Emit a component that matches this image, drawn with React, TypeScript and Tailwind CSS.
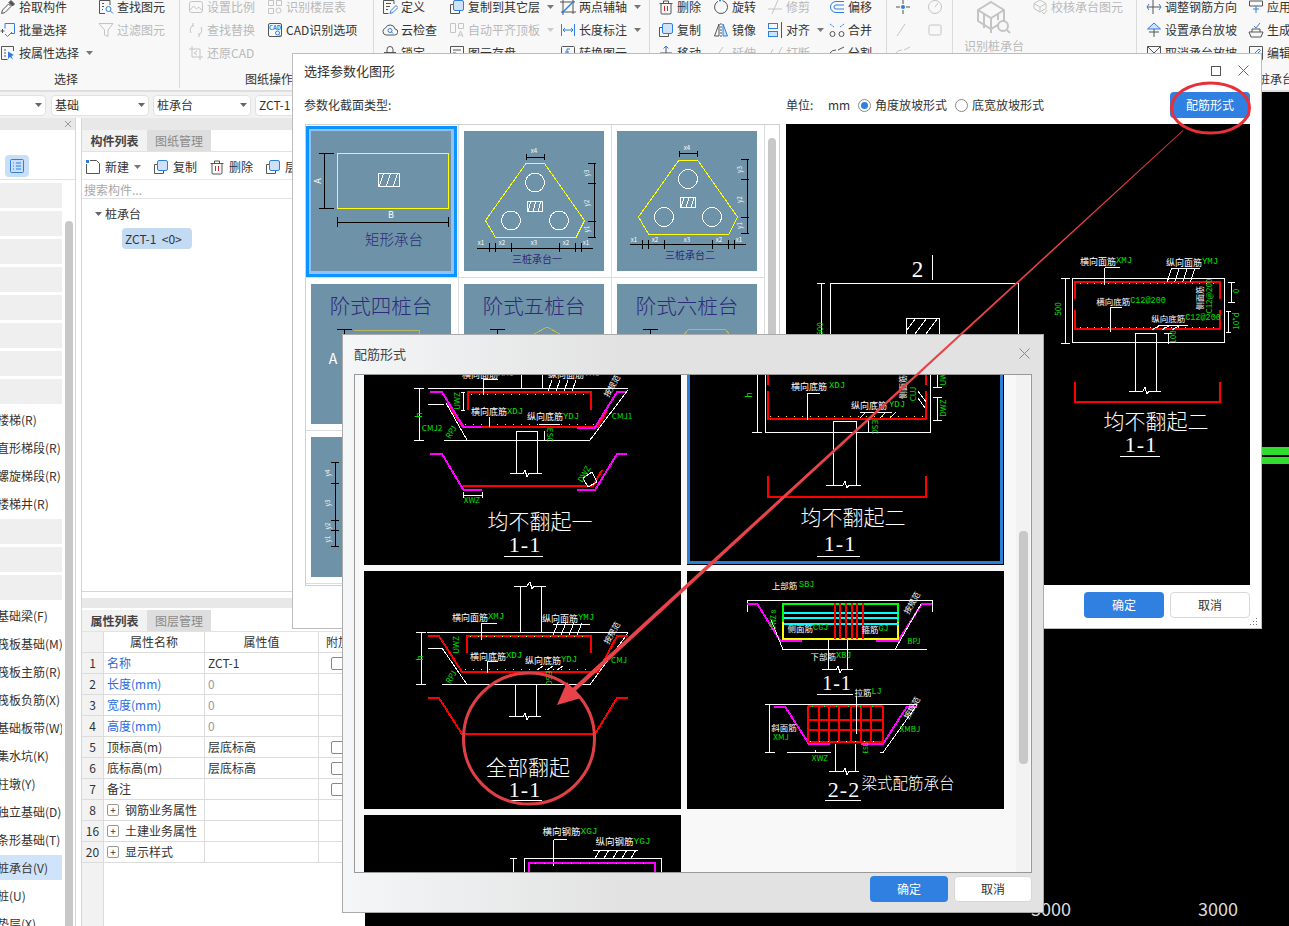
import React from 'react';

const FONT = "'Noto Sans CJK SC','Noto Sans',sans-serif";
const GREEN = '#00e000';
const RED = '#ff0000';
const MAG = '#ff00ff';
const INK = '#2e2a7a';

/* ---------- small svg helpers for the CAD drawings ---------- */
function P({ d, c = '#fff', w = 1 }: { d: string; c?: string; w?: number }) {
  return <path d={d} fill="none" stroke={c} strokeWidth={w} />;
}
function T({ x, y, s = 8, c = '#fff', a = 0, children }: { x: number; y: number; s?: number; c?: string; a?: number; children: React.ReactNode }) {
  return (
    <text x={x} y={y - s * 0.07} fontSize={s} fontWeight={s >= 14 ? 300 : 400} fill={c} textAnchor="middle" dominantBaseline="central" transform={a ? `rotate(${a} ${x} ${y})` : undefined}>
      {children}
    </text>
  );
}
function Sec({ x, y, t, s = 22 }: { x: number; y: number; t: string; s?: number }) {
  return (
    <text x={x} y={y - 1} fontSize={s} fill="#fff" textAnchor="middle" dominantBaseline="central" fontFamily="'Liberation Serif',serif" letterSpacing="1">
      {t}
    </text>
  );
}
function L({ x, y, w, g, s = 9, a = 0 }: { x: number; y: number; w: string; g: string; s?: number; a?: number }) {
  return (
    <T x={x} y={y} s={s} a={a}>
      {w}
      <tspan fill={GREEN} fontFamily="'Liberation Mono',monospace">{g}</tspan>
    </T>
  );
}
function Dots({ x1, x2, y, step = 8, c = '#ffff00' }: { x1: number; x2: number; y: number; step?: number; c?: string }) {
  const out: React.ReactNode[] = [];
  for (let x = x1; x <= x2; x += step) out.push(<rect key={x} x={x} y={y} width={1} height={1} fill={c} />);
  return <>{out}</>;
}
function Draw({ vb, children }: { vb: string; children: React.ReactNode }) {
  return (
    <svg viewBox={vb} className="block w-full h-full" shapeRendering="crispEdges" fontFamily={FONT}>
      {children}
    </svg>
  );
}
function Hatch({ x, y, w, h, n = 3 }: { x: number; y: number; w: number; h: number; n?: number }) {
  const st = w / n;
  let d = '';
  for (let i = 0; i < n; i++) d += `M${x + st * i + st * 0.2} ${y + h}L${x + st * i + st * 0.8} ${y}`;
  return (
    <>
      <rect x={x} y={y} width={w} height={h} fill="none" stroke="#fff" />
      <P d={d} />
    </>
  );
}

/* ---------- parametric thumbnails ---------- */
function RectThumb() {
  return (
    <Draw vb="311 131 140 140">
      <rect x="337" y="153" width="111" height="55" fill="none" stroke="#ffff00" />
      <Hatch x={378} y={173} w={21} h={13} />
      <P d="M324 153V208M319 153H334M319 208H334" c="#000" />
      <P d="M337 222H448M337 217V227M448 217V227" c="#000" />
      <T x={318} y={181} s={9} a={-90}>A</T>
      <T x={391} y={215} s={9}>B</T>
      <T x={394} y={240} s={14.5} c={INK}>矩形承台</T>
    </Draw>
  );
}
function PileThumb({ title, vb }: { title: string; vb: string }) {
  return (
    <Draw vb={vb}>
      <path d="M526 163.5H544.5L584.5 220.5L576 237.5H495.5L485.5 220.5Z" fill="none" stroke="#ffff00" />
      <circle cx="535" cy="182.5" r="9.5" fill="none" stroke="#fff" />
      <circle cx="511" cy="220.5" r="9.5" fill="none" stroke="#fff" />
      <circle cx="559" cy="220.5" r="9.5" fill="none" stroke="#fff" />
      <Hatch x={527} y={201} w={15} h={10} />
      <P d="M526 157H544M526 154V160M544 154V160" c="#000" />
      <T x={534} y={151} s={6}>x4</T>
      <P d="M594 163V237M588 163H596M588 183H596M588 221H596M588 237H596" c="#000" />
      <T x={587} y={173} s={6} a={-90}>y3</T>
      <T x={587} y={203} s={6} a={-90}>y2</T>
      <T x={587} y={229} s={6} a={-90}>y1</T>
      <P d="M477 248H593M489 243V252M495 243V252M511 243V252M559 243V252M575 243V252M581 243V252" c="#000" />
      <T x={481} y={243} s={6}>x1</T>
      <T x={502} y={243} s={6}>x2</T>
      <T x={534} y={243} s={6}>x3</T>
      <T x={566} y={243} s={6}>x2</T>
      <T x={586} y={243} s={6}>x1</T>
      <T x={537} y={259} s={10} c={INK}>{title}</T>
    </Draw>
  );
}
function StepThumb({ title, n }: { title: string; n: number }) {
  return (
    <div className="relative w-[140px] h-[140px] bg-[#6e93a8] overflow-hidden">
      <svg viewBox="0 0 140 140" className="block w-full h-full" shapeRendering="crispEdges" fontFamily={FONT}>
        <text x="70" y="21" fontSize="20.5" fontWeight="300" fill={INK} textAnchor="middle" dominantBaseline="central">{title}</text>
        <P d="M26 45H41M33 45V52" c="#000" />
        {n === 0 && <P d="M43 46H108V52" c="#b8b860" />}
        {n === 1 && <P d="M70 50L83 43L96 50" c="#b8b860" />}
        {n === 2 && <P d="M66 52L72 45H108L114 52" c="#b8b860" />}
        {n === 0 && <text x="22" y="74" fontSize="14" fill="#fff" textAnchor="middle" dominantBaseline="central">A</text>}
      </svg>
    </div>
  );
}
function DimThumb() {
  return (
    <Draw vb="311 437 140 140">
      <P d="M335 462V546M331 462H339M331 483H339M331 520H339M331 530H339M331 546H339" c="#000" />
      <T x={328} y={473} s={6} a={-90}>y4</T>
      <T x={328} y={503} s={6} a={-90}>y3</T>
      <T x={328} y={526} s={6} a={-90}>y2</T>
      <T x={328} y={539} s={6} a={-90}>y1</T>
    </Draw>
  );
}

/* ---------- CAD previews ---------- */
function MainPreview() {
  const h = [1171.7, 1179.3, 1187.3, 1195].map((x) => `M${x} 268L${x - 4.5} 282`).join('');
  return (
    <Draw vb="786 124 464 461">
      <Sec x={918} y={270} t="2" s={23} />
      <P d="M932 255V280M830 334V283H1018V334M906 334V318H939V334M821 283V334M817 283H825" />
      <P d="M906 331L916 318M915 334L927 318M926 334L938 318" />
      <T x={820} y={329} s={8} c={GREEN} a={-90}>500</T>
      <rect x="1072.5" y="278.5" width="152" height="64" fill="none" stroke="#fff" />
      <P d="M1075 299V282H1220V299M1075 310V329H1220V310" c={RED} w={2} />
      <Dots x1={1080} x2={1216} y={327} step={7} />
      <Dots x1={1080} x2={1216} y={283} step={7} />
      <L x={1106} y={262} w="横向面筋" g="XMJ" s={9} />
      <L x={1192} y={263} w="纵向面筋" g="YMJ" s={9} />
      <L x={1131} y={302} w="横向底筋" g="C12@200" s={8.5} />
      <L x={1186} y={319} w="纵向底筋" g="C12@200" s={8.5} />
      <P d={`M1104.5 267.5H1120M1104.5 267.5V285${h}M1172 268H1200`} />
      <P d="M1110 307.5H1122M1110 307.5V331.5M1160 325L1152 330M1170 325L1162 330M1180 325L1172 330M1188 325H1160" />
      <T x={1200} y={298} s={8} a={-90}>侧面筋</T>
      <T x={1209} y={296} s={8} c={GREEN} a={-90}>C12@200</T>
      <P d="M1065 278V343M1061 278H1070M1061 343H1070M1231.5 282V302M1228 282H1235M1228 302H1235M1228 311V332M1226 311H1231M1226 332H1231" />
      <T x={1058} y={309} s={8} c={GREEN} a={-90}>500</T>
      <T x={1236} y={291} s={8} c={GREEN} a={-90}>0</T>
      <T x={1236} y={321} s={8} c={GREEN} a={-90}>10*d</T>
      <P d="M1135.5 391V333.5H1156.5V391M1129 391H1143L1145 387L1147 394L1149 391H1161M1168 333V344M1164 333H1172" />
      <T x={1173} y={337} s={8} c={GREEN} a={-90}>100</T>
      <P d="M1075 382V402H1220V382" c={RED} w={2} />
      <T x={1156} y={421} s={21}>均不翻起二</T>
      <Sec x={1141} y={445} t="1-1" />
      <P d="M1120 456.5H1160" />
    </Draw>
  );
}

function CellOne() {
  return (
    <Draw vb="364 375 317 190">
      <P d="M428 388H628M521.5 375V388M542.5 375V388M419.5 388V440M414 388H424M414 440H424" />
      <P d="M468 410V392H591V410" c={RED} w={2} />
      <P d="M447 403L463 427H598L607 410" c={RED} w={2} />
      <Dots x1={471} x2={590} y={394} step={8} />
      <Dots x1={465} x2={595} y={424} step={8} />
      <P d="M430 392H442L463.5 427H481M627 392H617L595 427.5H577" c={MAG} w={2} />
      <P d="M444 440H590L628 390M467 440L446 403M428 404H444" />
      <T x={419} y={415} s={9} c={GREEN} a={-90}>h</T>
      <T x={457} y={401} s={8} c={GREEN} a={-90}>UWZ</T>
      <P d="M463 392V410M461 392H465M461 410H465" />
      <L x={497} y={412.5} w="横向底筋" g="XDJ" />
      <L x={553} y={417.5} w="纵向底筋" g="YDJ" />
      <L x={488} y={375} w="横向面筋" g="XMJ" />
      <L x={574} y={375} w="纵向面筋" g="YMJ" />
      <P d="M483 379V395M483 379H498M548 391L552 380M556 391L560 380M564 391L568 380M572 391L576 380M539 424H560M489 417V427" />
      <T x={432} y={428} s={8} c={GREEN}>CMJ2</T>
      <T x={622} y={416} s={8} c={GREEN}>CMJ1</T>
      <T x={451} y={432} s={8} c={GREEN} a={-60}>RPJ</T>
      <T x={550} y={435} s={8} c={GREEN} a={90}>ESC</T>
      <T x={612} y={386} s={8} a={-60}>按规范</T>
      <P d="M516 473.5V431.5H537.5V473.5M510 473.5H523L525 470L527 477L529 473.5H542M544 431V440" />
      <P d="M430 454H442L463.5 490H481.5M627 454H617L595 490H577" c={MAG} w={2} />
      <P d="M463 486H593L602 470" c={RED} w={2} />
      <P d="M583 478L592 472L597 482L588 487ZM463 492V498M482 492V498M463 495H482" />
      <T x={584} y={474} s={8} c={GREEN} a={-60}>DWZ</T>
      <T x={472} y={500} s={8} c={GREEN}>XWZ</T>
      <T x={540} y={521} s={21}>均不翻起一</T>
      <Sec x={525} y={545} t="1-1" />
      <P d="M504 556H543" />
    </Draw>
  );
}

function CellTwo() {
  return (
    <div className="w-[317px] h-[190px] bg-black">
      <div className="w-[316px] h-[189px] border-x-[3px] border-b-[3px] border-[#2a7fd8] bg-black">
        <Draw vb="690 375 310 186">
          <P d="M765.5 375V432.5H930.5V375M757.5 375V432.5M752 432.5H762M937.5 397V420M933 397H942M933 420H942M937.5 375V387M933 387H942" />
          <P d="M768 385V375M768 391V419H926V391M926 385V375" c={RED} w={2} />
          <Dots x1={770} x2={922} y={416} step={8} />
          <L x={818} y={387} w="横向底筋 " g="XDJ" />
          <L x={878} y={406} w="纵向底筋 " g="YDJ" />
          <P d="M807 393H820M807 393V420M860 418L866 412M870 418L876 412M880 418L886 412M890 418L896 412M860 412H892" />
          <T x={749} y={395} s={9} c={GREEN} a={-90}>h</T>
          <T x={943} y={408} s={8} c={GREEN} a={-90}>DWZ</T>
          <T x={943} y={379} s={8} c={GREEN} a={-90}>UW</T>
          <T x={903} y={387} s={8} a={-90}>侧面筋</T>
          <T x={913} y={394} s={8} c={GREEN} a={-90}>CUJ</T>
          <P d="M918 391L926 402M918 398L925 408" />
          <T x={875} y={427} s={8} c={GREEN} a={90}>ESC</T>
          <P d="M833.5 485V421.5H856.5V485M826 485H843L845 481L847 488L849 485H861M868 420V432" />
          <P d="M768 476V497H926V476" c={RED} w={2} />
          <T x={853} y={517} s={21}>均不翻起二</T>
          <Sec x={840} y={544} t="1-1" />
          <P d="M817 556H860" />
        </Draw>
      </div>
    </div>
  );
}

function CellThree() {
  return (
    <Draw vb="364 571 317 238">
      <P d="M520 632V586H514H527L530 582L532 589L534 586H546M541.5 586V632" />
      <P d="M427 632.5H628M421.5 632.5V684.5M416 632.5H426M416 684.5H426M442 684.5H590L628 633M467 684.5L442 648M428 648H442" />
      <P d="M466.5 653V636H590.5V653" c={RED} w={2} />
      <P d="M428 636H439L462 672H598L617 636H628" c={RED} w={2} />
      <Dots x1={470} x2={588} y={636} step={8} />
      <Dots x1={465} x2={595} y={669} step={8} />
      <T x={420} y={658} s={9} c={GREEN} a={-90}>h</T>
      <T x={456} y={645} s={8} c={GREEN} a={-90}>UWZ</T>
      <L x={478} y={618} w="横向面筋" g="XMJ" />
      <L x={568} y={619} w="纵向面筋" g="YMJ" />
      <L x={496} y={657} w="横向底筋" g="XDJ" />
      <L x={551} y={661} w="纵向底筋" g="YDJ" />
      <P d="M481 623H497M481 623V640M553 635L558 623M561 635L566 623M569 635L574 623M577 635L582 623M553 624H590M487 661H498M487 661V673M537 670L543 666M547 670L553 666M557 670L563 666" />
      <T x={619} y={660} s={8} c={GREEN}>CMJ</T>
      <T x={451} y={677} s={8} c={GREEN} a={-60}>RPJ</T>
      <T x={549} y={678} s={8} c={GREEN} a={90}>ESC</T>
      <T x={612} y={633} s={8} a={-60}>按规范</T>
      <P d="M515 716.5V684.5M536.5 684.5V716.5M509 716.5H523L525 713L527 720L529 716.5H541" />
      <P d="M428 698H439L462 734H595L617 698H628" c={RED} w={2} />
      <T x={528} y={767} s={21}>全部翻起</T>
      <Sec x={525} y={790} t="1-1" />
      <P d="M504 800H542" />
    </Draw>
  );
}

function CellFour() {
  const verts = [835, 840, 846, 852, 857, 863];
  const gx = [808, 819, 829, 839, 851, 861, 871, 883];
  const gy = [706, 720, 730, 742];
  return (
    <Draw vb="687 571 317 238">
      <P d="M747 600H932M747 600V612M932 600V612" />
      <P d="M747 603.5H757L780 640.5H802M932 603.5H922L898.5 640.5H876" c={MAG} w={2} />
      <P d="M783 622V604H898V622" c="#00ff00" w={2} />
      <P d="M783 622V639H898V622" c="#ffff00" w={2} />
      <P d="M784 613H899M784 618H899M784 624H899" c="#00ffff" w={2} />
      {verts.map((x) => (
        <P key={x} d={`M${x} 603V639`} c={RED} w={2} />
      ))}
      <P d="M783 649.5H927M783 649.5L771 620M895 649.5L921 604M828.5 669.5V640M847.5 640V669.5M822 669.5H836L838 666L840 673L842 669.5H853" />
      <L x={793} y={586} w="上部筋 " g="SBJ" s={8.5} />
      <L x={808} y={629} w="侧面筋" g="CGJ" s={8.5} />
      <L x={875} y={630} w="箍筋" g="GJ" s={8.5} />
      <L x={831} y={657} w="下部筋" g="XBJ" s={8.5} />
      <T x={914} y={641} s={8} c={GREEN}>BPJ</T>
      <T x={773} y={620} s={7} c={GREEN} a={-90}>UWZ 8</T>
      <T x={912} y={603} s={8} a={-60}>按规范</T>
      <Sec x={837} y={684} t="1-1" s={20} />
      <P d="M817 694.5H853" />
      <P d="M774 704.5H917M769.5 704V752.5M765 704H775M765 752.5H775M787 752.5H815M880 752.5H883L917 705" />
      <P d="M774 706.5H785L809 744H830M917 706.5H907L883 744H861" c={MAG} w={2} />
      {gx.map((x) => (
        <P key={x} d={`M${x} 706V742`} c={RED} w={2} />
      ))}
      {gy.map((y) => (
        <P key={y} d={`M808 ${y}H883`} c={RED} w={2} />
      ))}
      <Dots x1={810} x2={880} y={741} step={9} />
      <Dots x1={812} x2={880} y={706} step={12} c="#00ff00" />
      <L x={868} y={693} w="拉筋" g="LJ" s={8.5} />
      <T x={784} y={728} s={8.5}>斜面筋</T>
      <T x={781} y={737} s={8} c={GREEN}>XMJ</T>
      <T x={910} y={729} s={8} c={GREEN}>XMBJ</T>
      <T x={820} y={758} s={8} c={GREEN}>XWZ</T>
      <T x={912} y={708} s={8} a={-60}>按规范</T>
      <P d="M856 696V734M815 752V750M809 752H831" />
      <T x={866} y={748} s={6} c={GREEN} a={-90}>ESB</T>
      <P d="M835.5 771.5V743.5M855 743.5V771.5M829 771.5H843L845 768L847 775L849 771.5H859" />
      <Sec x={844} y={790} t="2-2" />
      <P d="M825 800H861" />
      <T x={908} y={783} s={15.5}>梁式配筋承台</T>
    </Draw>
  );
}

function CellFive() {
  return (
    <div className="w-[317px] h-[80px] bg-black">
      <Draw vb="364 815 317 80">
        <L x={570} y={832} w="横向钢筋" g="XGJ" s={9.5} />
        <L x={623} y={842} w="纵向钢筋" g="YGJ" s={9.5} />
        <P d="M553.5 839.5H567M553.5 839.5V866M593 850H638M595 858L600 850M604 858L609 850M613 858L618 850M622 858L627 850M631 858L636 850" />
        <P d="M524 880V858.5H661V880M510 858H517M513 858V880" />
        <P d="M529 880V862.5H655V880" c={MAG} w={2} />
        <Dots x1={535} x2={650} y={863} step={9} c="#00ffff" />
      </Draw>
    </div>
  );
}

/* ---------- ribbon icons ---------- */
type IconName =
  | 'pick' | 'find' | 'batch' | 'filter' | 'attr' | 'scale' | 'floor' | 'swap' | 'cad' | 'crop'
  | 'def' | 'cloud' | 'lock' | 'copy' | 'flush' | 'save' | 'axis' | 'dim' | 'conv' | 'del' | 'rot'
  | 'mirror' | 'trim' | 'align' | 'offset' | 'merge' | 'move' | 'extend' | 'break' | 'split'
  | 'adj' | 'slope' | 'nope' | 'apply' | 'gen' | 'edit' | 'check';

function Icon({ n, g }: { n: IconName; g?: boolean }) {
  const s = g ? '#c4c4c4' : '#555';
  const a = g ? '#c4c4c4' : '#2f7fe0';
  const f = g ? 'none' : '#cfe2fa';
  const map: Record<IconName, React.ReactNode> = {
    pick: <><path d="M1.5 14.5l1-3.5 6-6 2.5 2.5-6 6z" stroke={s} /><path d="M9 3.5l3.5 3.5M11 1.5l3.5 3.5-2 2-3.5-3.5z" fill={s} stroke={s} /></>,
    find: <><path d="M12 6V1.5H1.5v13H7" stroke={s} /><path d="M4 4.5h2M4 7.5h2M4 10.5h1" stroke={s} /><circle cx="10.5" cy="10" r="2.5" stroke={a} /><path d="M12.5 12l2.5 2.5" stroke={a} /></>,
    batch: <><path d="M5 1.5h9.5v10H10M5 1.5v5" stroke={a} /><path d="M.5 9h4M2.5 7v4" stroke={s} /><path d="M5 12l2.5 2.5L12 10" stroke={a} /></>,
    filter: <path d="M1 1.5h14L10 8v6.5L6.5 13V8z" stroke={s} />,
    attr: <><path d="M13.5 6V1.5h-12v13h6" stroke={s} /><path d="M4 5h2M4 8h2M4 11h2" stroke={s} /><path d="M8 6.5l6 3.5-2.5 1L13 14.5l-3-2.5-2 2z" fill={a} /></>,
    scale: <><rect x="1.5" y="2.5" width="13" height="11" rx="2" stroke={s} /><path d="M2 11l3.5-4 3 3 2-2 3.5 3" stroke={s} /></>,
    floor: <><path d="M1.5 1.5h5v5h-5zM9.5 1.5h5v5h-5zM1.5 9.5h5v5h-5z" stroke={s} /><circle cx="11.5" cy="11.5" r="2.5" stroke={s} /></>,
    swap: <><path d="M3 11A6 6 0 0 1 5 3M5 1v4M13 5a6 6 0 0 1-2 8M11 15v-4" stroke={s} /></>,
    cad: <><rect x="1.5" y="1.5" width="13" height="13" rx="1.5" stroke={s} /><text x="8" y="8" fontSize="6" fontWeight="700" fill={a} textAnchor="middle">CAD</text><circle cx="10.5" cy="11" r="2" stroke={a} /><path d="M12 12.5l2 2" stroke={a} /></>,
    crop: <><path d="M4 1v11h11M1 4h11v11" stroke={s} /><path d="M9 6l-3 2 3 2" stroke={s} /></>,
    def: <><path d="M12 5V1.5H1.5v13h5" stroke={s} /><path d="M4 4.5h5M4 7.5h4M4 10.5h2" stroke={s} /><path d="M8 14.5l1-3 5-5 2 2-5 5z" stroke={a} /></>,
    cloud: <><path d="M4 13h8.5a3 3 0 0 0 .5-6 5 5 0 0 0-9.5-1A3.6 3.6 0 0 0 4 13z" stroke={s} /><circle cx="8" cy="8.5" r="2" stroke={a} /><path d="M9.5 10l1.5 1.5" stroke={a} /></>,
    lock: <><rect x="2.5" y="7.5" width="11" height="7" stroke={s} /><path d="M5 7.5V4.5a3 3 0 0 1 6 0v3" stroke={s} /></>,
    copy: <><path d="M4.5 5.5h-3v9h9v-3" stroke={s} /><rect x="4.5" y="1.5" width="10" height="10" rx="1.5" fill={f} stroke={a} /></>,
    flush: <><path d="M1.5 1.5h5v9h-5zM9.5 1.5h5v5h-5z" stroke={s} /><path d="M9 15l2.5-6L14 15M10 13h3" stroke={s} /></>,
    save: <><path d="M1.5 1.5h13v13h-13z" stroke={s} /><path d="M4 5h8M4 8h3M10 11h3" stroke={s} /></>,
    axis: <><path d="M3 1v15M13 0v15M0 3h15M1 13h15" stroke={s} /><path d="M2 14L14 2" stroke={a} strokeWidth="1.5" /></>,
    dim: <path d="M1.5 2v12M14.5 2v12M3 8h10M5 6L3 8l2 2M11 6l2 2-2 2" stroke={a} />,
    conv: <><rect x="1.5" y="1.5" width="13" height="13" rx="1" stroke={s} /><path d="M10 4H7v8M5 7h4" stroke={a} /></>,
    del: <><path d="M3 4.5h10V14a1 1 0 0 1-1 1H4a1 1 0 0 1-1-1zM1.5 4.5h13M5.5 4.5V2h5v2.5" stroke={s} /><path d="M6.5 7v5M9.5 7v5" stroke="#e02020" /></>,
    rot: <><path d="M9.5 1.7A6.5 6.5 0 1 1 5 2.3" stroke={s} /><circle cx="7" cy="1.5" r="1" fill={a} /></>,
    mirror: <><path d="M6 2L1.5 14H6z" stroke={s} /><path d="M10 2l4.5 12H10z" fill={f} stroke={a} /><path d="M8 1v14" stroke={s} strokeDasharray="2 1" /></>,
    trim: <path d="M1 10h14M11 1L5 15" stroke={s} />,
    align: <><rect x="1.5" y="1.5" width="9" height="5" stroke={a} /><rect x="1.5" y="9.5" width="9" height="5" fill={f} stroke={a} /><path d="M14.5 0v16" stroke={s} /></>,
    offset: <path d="M15 2.5H7a5.5 5.5 0 0 0 0 11h8M15 6H7a2 2 0 0 0 0 4h8" stroke={a} />,
    merge: <><circle cx="3.5" cy="12" r="2.5" stroke={s} /><circle cx="12.5" cy="12" r="2.5" stroke={s} /><path d="M1 2l4 3M15 2l-4 3" stroke={a} strokeDasharray="2 1" /></>,
    move: <><path d="M8 1v11M2 8h12" stroke={s} /><path d="M5.5 3.5L8 1l2.5 2.5" stroke={a} /></>,
    extend: <path d="M2 14L10 2" stroke={s} />,
    break: <path d="M1 14L6 4M10 12l5-10" stroke={s} />,
    split: <path d="M1 8a7 7 0 0 1 6-3M9 5l6-3" stroke={s} />,
    adj: <><path d="M7 1v14M1 8h14" stroke={s} /><path d="M3 5L1 8l2 3M13 5l2 3-2 3" stroke={a} /></>,
    slope: <><path d="M1.5 7l6.5-6 6.5 6z" fill={f} stroke={a} /><path d="M3 10h10M8 7v8" stroke={s} /></>,
    nope: <><path d="M1.5 1.5h13v13h-13z" stroke={s} /><path d="M1.5 1.5l13 13M14.5 1.5l-13 13" stroke={s} /></>,
    apply: <><path d="M1.5 2h13v5h-13z" stroke={s} /><path d="M5 10h6M8 7v7" stroke={a} /></>,
    gen: <><path d="M1 10h14l-2 5H3zM4 10V7h8v3" stroke={s} /><path d="M6 4l2 2 4-5" stroke={a} /></>,
    edit: <><path d="M1.5 1.5h13v13h-13z" stroke={s} /><path d="M6 11l1-3 4-4 1.5 1.5-4 4z" stroke={a} /></>,
    check: <><path d="M8 1l6 3.5v5L8 13 2 9.5v-5z" stroke={s} /><path d="M2 4.5L8 8l6-3.5M8 8v5" stroke={s} /><path d="M10 13l2 2 3-4" stroke={s} /></>,
  };
  return (
    <svg viewBox="0 0 16 16" className="w-4 h-4 shrink-0" fill="none">
      {map[n]}
    </svg>
  );
}

function Caret({ c = '#777' }: { c?: string }) {
  return (
    <svg viewBox="0 0 7 4" className="w-[7px] h-[4px] shrink-0">
      <path d="M0 0H7L3.5 4Z" fill={c} />
    </svg>
  );
}

function Item({ i, t, g, caret }: { i: IconName; t: string; g?: boolean; caret?: boolean }) {
  return (
    <div className={`flex items-center gap-[3px] h-[23px] whitespace-nowrap ${g ? 'text-[#b8b8b8]' : 'text-[#333]'}`}>
      <Icon n={i} g={g} />
      <span>{t}</span>
      {caret && <span className="ml-[4px]"><Caret c={g ? '#ccc' : '#777'} /></span>}
    </div>
  );
}

function Group({ w, pl = 8, label, labelMl = 0, children }: { w: number; pl?: number; label?: string; labelMl?: number; children: React.ReactNode }) {
  return (
    <div style={{ width: w }} className="shrink-0 h-[88px] border-r border-[#dadada] flex flex-col">
      <div style={{ paddingLeft: pl }} className="flex h-[73px] -mt-[5px] shrink-0">
        {children}
      </div>
      {label && <div style={{ marginLeft: labelMl }} className="text-[#333] leading-[14px] mt-[4px] whitespace-nowrap">{label}</div>}
    </div>
  );
}

function Col({ w, children }: { w?: number; children: React.ReactNode }) {
  return <div style={w ? { width: w } : undefined} className="flex flex-col shrink-0">{children}</div>;
}

function Ribbon() {
  return (
    <div className="h-[92px] shrink-0 bg-[#f8f8f8] border-b-2 border-[#dedede] overflow-hidden flex">
      <Group w={180} pl={0} label="选择" labelMl={54}>
        <Col w={98}>
          <Item i="pick" t="拾取构件" />
          <Item i="batch" t="批量选择" />
          <Item i="attr" t="按属性选择" caret />
        </Col>
        <Col>
          <Item i="find" t="查找图元" />
          <Item i="filter" t="过滤图元" g />
        </Col>
      </Group>
      <Group w={194} label="图纸操作" labelMl={65}>
        <Col w={79}>
          <Item i="scale" t="设置比例" g />
          <Item i="swap" t="查找替换" g />
          <Item i="crop" t="还原CAD" g />
        </Col>
        <Col>
          <Item i="floor" t="识别楼层表" g />
          <Item i="cad" t="CAD识别选项" />
        </Col>
      </Group>
      <Group w={276}>
        <Col w={67}>
          <Item i="def" t="定义" />
          <Item i="cloud" t="云检查" />
          <Item i="lock" t="锁定" />
        </Col>
        <Col w={111}>
          <Item i="copy" t="复制到其它层" caret />
          <Item i="flush" t="自动平齐顶板" g caret />
          <Item i="save" t="图元存盘" />
        </Col>
        <Col>
          <Item i="axis" t="两点辅轴" caret />
          <Item i="dim" t="长度标注" caret />
          <Item i="conv" t="转换图元" />
        </Col>
      </Group>
      <Group w={237}>
        <Col w={55}>
          <Item i="del" t="删除" />
          <Item i="copy" t="复制" />
          <Item i="move" t="移动" />
        </Col>
        <Col w={54}>
          <Item i="rot" t="旋转" />
          <Item i="mirror" t="镜像" />
          <Item i="extend" t="延伸" g />
        </Col>
        <Col w={62}>
          <Item i="trim" t="修剪" g />
          <Item i="align" t="对齐" caret />
          <Item i="break" t="打断" g />
        </Col>
        <Col>
          <Item i="offset" t="偏移" />
          <Item i="merge" t="合并" />
          <Item i="split" t="分割" />
        </Col>
      </Group>
      <Group w={66}>
        <Col w={32}>
          <div className="h-[23px] flex items-center">
            <svg viewBox="0 0 16 16" className="w-4 h-4" fill="none">
              <path d="M8 1v4M8 11v4M1 8h4M11 8h4" stroke="#555" />
              <circle cx="8" cy="8" r="2" fill="#2f7fe0" />
            </svg>
          </div>
          <div className="h-[23px] flex items-center"><Icon n="extend" g /></div>
          <div className="h-[23px] flex items-center"><Icon n="split" g /></div>
        </Col>
        <Col>
          <div className="h-[23px] flex items-center">
            <svg viewBox="0 0 16 16" className="w-4 h-4" fill="none">
              <circle cx="8" cy="8" r="6.5" stroke="#c4c4c4" />
              <path d="M8 8l3-4" stroke="#c4c4c4" />
            </svg>
          </div>
          <div className="h-[23px] flex items-center">
            <svg viewBox="0 0 16 16" className="w-4 h-4" fill="none">
              <rect x="2" y="3" width="12" height="10" rx="1.5" stroke="#c4c4c4" />
            </svg>
          </div>
        </Col>
      </Group>
      <Group w={184}>
        <div className="w-[66px] shrink-0 flex flex-col items-center pt-[5px] mr-[5px]">
          <svg viewBox="0 0 36 36" className="w-[36px] h-[36px] -ml-[3px]" fill="none" stroke="#c4c4c4" strokeWidth="2">
            <path d="M16 2l13 8v11l-13 8-13-8V10z" />
            <path d="M3 10l13 8 13-8M16 18v15M9 14v14M23 14v6" />
            <circle cx="28" cy="26" r="5" fill="#f8f8f8" />
            <path d="M32 30l3 3" />
          </svg>
          <span className="text-[#b8b8b8] mt-[3px] whitespace-nowrap leading-[14px]">识别桩承台</span>
        </div>
        <Col>
          <Item i="check" t="校核承台图元" g />
        </Col>
      </Group>
      <Group w={160} pl={9} label="桩承台" labelMl={121}>
        <Col w={102}>
          <Item i="adj" t="调整钢筋方向" />
          <Item i="slope" t="设置承台放坡" />
          <Item i="nope" t="取消承台放坡" />
        </Col>
        <Col>
          <Item i="apply" t="应用同名" />
          <Item i="gen" t="生成土方" />
          <Item i="edit" t="编辑钢筋" />
        </Col>
      </Group>
    </div>
  );
}

/* ---------- left panels ---------- */
function Select({ w, t, cut }: { w: string; t?: string; cut?: boolean }) {
  return (
    <div className={`${w} h-[21px] shrink-0 bg-white border border-[#e2e2e2] flex items-center px-[3px] ${cut ? 'rounded-r' : 'rounded'}`}>
      <span className="flex-1 truncate">{t}</span>
      <Caret c="#666" />
    </div>
  );
}

const leftRows: [string, boolean?][] = [
  ...Array.from({ length: 8 }, () => ['' ] as [string]),
  ['楼梯(R)'], ['直形梯段(R)'], ['螺旋梯段(R)'], ['楼梯井(R)'],
  [''], [''], [''],
  ['基础梁(F)'], ['筏板基础(M)'], ['筏板主筋(R)'], ['筏板负筋(X)'], ['基础板带(W)'],
  ['集水坑(K)'], ['柱墩(Y)'], ['独立基础(D)'], ['条形基础(T)'], ['桩承台(V)', true], ['桩(U)'], ['垫层(X)'],
];

function LeftPanel() {
  return (
    <div className="w-[76px] shrink-0 border-r border-[#d6d6d6] flex flex-col overflow-hidden">
      <div className="h-[12px] shrink-0 bg-[#e8e8e8] flex items-center justify-end pr-[3px]">
        <svg viewBox="0 0 8 8" className="w-2 h-2" fill="none"><path d="M1 1l6 6M7 1L1 7" stroke="#999" /></svg>
      </div>
      <div className="h-[50px] shrink-0 border-b border-[#e2e2e2] flex items-start pl-[5px] pt-[25px]">
        <div className="w-[24px] h-[22px] rounded bg-[#c9dff7] flex items-center justify-center">
          <svg viewBox="0 0 16 16" className="w-4 h-4" fill="none">
            <rect x="1.5" y="1.5" width="13" height="13" rx="1" stroke="#2f7fe0" />
            <path d="M4 5h1M7 5h5M4 8h1M7 8h5M4 11h1M7 11h5" stroke="#2f7fe0" />
          </svg>
        </div>
      </div>
      <div className="flex flex-1 pt-[3px]">
        <div className="w-[62px] shrink-0 flex flex-col gap-[3px]">
          {leftRows.map(([t, sel], i) => (
            <div key={i} className={`h-[25px] shrink-0 flex items-center overflow-hidden whitespace-nowrap ${sel ? 'bg-[#cfe3fb]' : t ? '' : 'bg-[#efefef]'}`}>
              <span className="-ml-[3px]">{t}</span>
            </div>
          ))}
        </div>
        <div className="w-[14px] pl-[3px] pt-[38px]">
          <div className="w-[8px] h-full bg-[#c8c8c8] rounded-t" />
        </div>
      </div>
    </div>
  );
}

function Tabs({ a, b }: { a: string; b: string }) {
  return (
    <div className="flex h-[22px] shrink-0 border-b border-[#e2e2e2]">
      <div className="w-[65px] bg-[#f2f2f2] font-bold flex items-center justify-center text-[#444]">{a}</div>
      <div className="w-[64px] bg-[#dedede] flex items-center justify-center text-[#8a8a8a]">{b}</div>
    </div>
  );
}

const tableRows: { n: number; name: string; blue?: boolean; val?: string; dim?: boolean; chk?: boolean; plus?: boolean }[] = [
  { n: 1, name: '名称', blue: true, val: 'ZCT-1', chk: true },
  { n: 2, name: '长度(mm)', blue: true, val: '0', dim: true },
  { n: 3, name: '宽度(mm)', blue: true, val: '0', dim: true },
  { n: 4, name: '高度(mm)', blue: true, val: '0', dim: true },
  { n: 5, name: '顶标高(m)', val: '层底标高', chk: true },
  { n: 6, name: '底标高(m)', val: '层底标高', chk: true },
  { n: 7, name: '备注', chk: true },
  { n: 8, name: '钢筋业务属性', plus: true },
  { n: 16, name: '土建业务属性', plus: true },
  { n: 20, name: '显示样式', plus: true },
];

function MidPanel() {
  return (
    <div className="ml-[5px] flex-1 flex flex-col border-l border-[#d6d6d6] min-w-0">
      <div className="h-[12px] shrink-0 bg-[#e8e8e8]" />
      <Tabs a="构件列表" b="图纸管理" />
      <div className="h-[28px] shrink-0 border-b border-[#e8e8e8] flex items-center pl-[3px] pt-[2px] whitespace-nowrap overflow-hidden">
        <svg viewBox="0 0 16 16" className="w-4 h-4 shrink-0" fill="none">
          <path d="M1.5 5v9.5h13v-10L11.5 1.5H5" stroke="#555" />
          <path d="M1 1h3v3H1z" fill="#2f7fe0" />
        </svg>
        <span className="ml-[4px]">新建</span>
        <span className="ml-[5px] mr-[12px]"><Caret /></span>
        <Icon n="copy" />
        <span className="ml-[4px] mr-[12px]">复制</span>
        <Icon n="del" />
        <span className="ml-[4px] mr-[12px]">删除</span>
        <Icon n="copy" />
        <span className="ml-[4px]">层间复制</span>
      </div>
      <div className="h-[19px] shrink-0 border-b border-[#e2e2e2] flex items-center pl-[2px] pt-[2px] text-[#a8a8a8]">搜索构件...</div>
      <div className="h-[393px] shrink-0 border-b border-[#d6d6d6] pt-[6px]">
        <div className="h-[18px] flex items-center pl-[13px]">
          <Caret c="#666" />
          <span className="ml-[3px]">桩承台</span>
        </div>
        <div className="ml-[40px] mt-[5px] w-[70px] h-[21px] rounded bg-[#c3daf3] flex items-center pl-[3px] whitespace-pre">ZCT-1  &lt;0&gt;</div>
      </div>
      <div className="h-[10px] shrink-0 mt-[6px] bg-[#e8e8e8]" />
      <div className="mt-[2px]"><Tabs a="属性列表" b="图层管理" /></div>
      <div className="flex-1 relative overflow-hidden">
        <div className="flex h-[21px] border-b border-[#dcdcdc]">
          <div className="w-[22px] bg-[#f2f2f2] border-r border-[#dcdcdc]" />
          <div className="w-[101px] border-r border-[#dcdcdc] flex items-center justify-center">属性名称</div>
          <div className="w-[114px] border-r border-[#dcdcdc] flex items-center justify-center">属性值</div>
          <div className="flex-1 pl-[7px] flex items-center whitespace-nowrap overflow-hidden">附加</div>
        </div>
        {tableRows.map((r) => (
          <div key={r.n} className="flex h-[21px] border-b border-[#dcdcdc]">
            <div className="w-[22px] bg-[#f2f2f2] border-r border-[#dcdcdc] flex items-center justify-center">{r.n}</div>
            <div className={`w-[101px] border-r border-[#dcdcdc] flex items-center pl-[3px] whitespace-nowrap ${r.blue ? 'text-[#2b6be0]' : ''}`}>
              {r.plus && (
                <span className="w-[12px] h-[12px] mr-[6px] border border-[#999] rounded-[2px] flex items-center justify-center text-[10px] leading-none">+</span>
              )}
              {r.name}
            </div>
            <div className={`w-[114px] border-r border-[#dcdcdc] flex items-center pl-[3px] ${r.dim ? 'text-[#999]' : ''}`}>{r.val}</div>
            <div className="flex-1 flex items-center pl-[12px]">
              {r.chk && <span className="w-[13px] h-[13px] border border-[#888] rounded-[2px] bg-white" />}
            </div>
          </div>
        ))}
        <div className="w-[22px] h-[80px] bg-[#f2f2f2] border-r border-[#dcdcdc]" />
      </div>
    </div>
  );
}

/* ---------- dialogs ---------- */
function Radio({ on }: { on?: boolean }) {
  return (
    <span className="w-[13px] h-[13px] rounded-full border border-[#888] flex items-center justify-center shrink-0 bg-white">
      {on && <span className="w-[7px] h-[7px] rounded-full bg-[#2f7fe0]" />}
    </span>
  );
}

function Btn({ t, primary }: { t: string; primary?: boolean }) {
  return (
    <div className={`w-[80px] h-[26px] rounded flex items-center justify-center ${primary ? 'bg-[#2f80e0] text-white' : 'bg-white border border-[#d8d8d8] text-[#333]'}`}>
      {t}
    </div>
  );
}

function Thumb({ children, sel, last }: { children?: React.ReactNode; sel?: boolean; last?: boolean }) {
  if (sel)
    return (
      <div className="w-[153px] h-[153px] pt-px border-r border-b border-[#dcdcdc]">
        <div className="w-[151px] h-[151px] border-[3px] border-[#0b95ff] bg-[#93c0f7] p-[2px]">
          <div className="w-[140px] h-[140px] bg-[#6e93a8]">{children}</div>
        </div>
      </div>
    );
  return (
    <div className={`w-[153px] h-[153px] pl-[5px] pt-[6px] border-b border-[#dcdcdc] ${last ? '' : 'border-r'}`}>
      <div className="w-[140px] h-[140px] bg-[#6e93a8]">{children}</div>
    </div>
  );
}

function ParamDialog() {
  return (
    <div className="absolute left-[292px] top-[53px] w-[970px] h-[576px] bg-white border border-[#bcbcbc] flex flex-col">
      <div className="h-[36px] shrink-0 flex items-center pl-[11px] pr-[12px] pb-[3px]">
        <span className="text-[13px] flex-1">选择参数化图形</span>
        <svg viewBox="0 0 10 10" className="w-[10px] h-[10px] mr-[17px]" fill="none"><rect x=".5" y=".5" width="9" height="9" stroke="#555" /></svg>
        <svg viewBox="0 0 11 11" className="w-[11px] h-[11px]" fill="none"><path d="M.5.5l10 10M10.5.5l-10 10" stroke="#666" /></svg>
      </div>
      <div className="h-[30px] shrink-0 flex items-center pl-[11px]">
        <div className="w-[482px]">参数化截面类型:</div>
        <div className="w-[42px]">单位:</div>
        <div className="w-[30px]">mm</div>
        <Radio on />
        <div className="ml-[4px] w-[72px] whitespace-nowrap">角度放坡形式</div>
        <div className="ml-[8px]"><Radio /></div>
        <div className="ml-[4px] w-[72px] whitespace-nowrap">底宽放坡形式</div>
        <div className="ml-auto mr-[11px]"><Btn t="配筋形式" primary /></div>
      </div>
      <div className="h-[462px] shrink-0 mt-[4px] pl-[12px] flex gap-[6px]">
        <div className="w-[475px] h-[462px] border border-[#d0d0d0] flex overflow-hidden">
          <div className="grid grid-cols-[153px_153px_153px] w-[459px] shrink-0 content-start">
            <Thumb sel><RectThumb /></Thumb>
            <Thumb><PileThumb title="三桩承台一" vb="464 131 140 140" /></Thumb>
            <Thumb><PileThumb title="三桩承台二" vb="464 134.5 140 140" /></Thumb>
            <Thumb><StepThumb title="阶式四桩台" n={0} /></Thumb>
            <Thumb><StepThumb title="阶式五桩台" n={1} /></Thumb>
            <Thumb><StepThumb title="阶式六桩台" n={2} /></Thumb>
            <Thumb><DimThumb /></Thumb>
            <Thumb />
            <Thumb />
          </div>
          <div className="flex-1 pl-[3px] pt-[13px]">
            <div className="w-[8px] h-[300px] rounded bg-[#c8c8c8]" />
          </div>
        </div>
        <div className="w-[464px] h-[461px] bg-black"><MainPreview /></div>
      </div>
      <div className="flex justify-end gap-[6px] pr-[11px] pt-[6px]">
        <Btn t="确定" primary />
        <Btn t="取消" />
      </div>
      <svg viewBox="0 0 8 8" className="absolute right-[3px] bottom-[3px] w-2 h-2">
        <path d="M6 1h1v1H6zM6 4h1v1H6zM3 4h1v1H3zM6 7h1v1H6zM3 7h1v1H3zM0 7h1v1H0z" fill="#777" />
      </svg>
    </div>
  );
}

function RebarDialog() {
  return (
    <div className="absolute left-[342px] top-[334px] w-[702px] h-[579px] border border-[#aaa] bg-linear-to-r from-[#f4f6f7] to-[#e2e2e2] to-40% flex flex-col">
      <div className="h-[39px] shrink-0 flex items-center pl-[11px] pr-[13px] pb-[3px]">
        <span className="text-[13px] flex-1 text-[#444]">配筋形式</span>
        <svg viewBox="0 0 11 11" className="w-[11px] h-[11px]" fill="none"><path d="M.5.5l10 10M10.5.5l-10 10" stroke="#888" /></svg>
      </div>
      <div className="mx-[11px] h-[499px] shrink-0 border border-[#999] bg-[#f8f8f8] flex overflow-hidden">
        <div className="pl-[9px] w-[649px] shrink-0">
          <div className="grid grid-cols-[317px_317px] gap-[6px]">
            <div className="h-[190px] bg-black"><CellOne /></div>
            <CellTwo />
            <div className="h-[238px] bg-black"><CellThree /></div>
            <div className="h-[238px] bg-black"><CellFour /></div>
            <CellFive />
          </div>
        </div>
        <div className="w-[12px] shrink-0" />
        <div className="w-[14px] shrink-0 bg-[#f2f2f2] pl-[3px] pt-[156px]">
          <div className="w-[9px] h-[233px] rounded bg-[#c8c8c8]" />
        </div>
      </div>
      <div className="flex justify-end gap-[6px] pr-[11px] pt-[3px]">
        <div className="w-[78px] h-[26px] rounded bg-[#2f80e0] text-white flex items-center justify-center">确定</div>
        <div className="w-[78px] h-[26px] rounded bg-white border border-[#d8d8d8] flex items-center justify-center">取消</div>
      </div>
    </div>
  );
}

function Annotation() {
  return (
    <svg viewBox="0 0 1289 926" className="absolute inset-0 w-full h-full pointer-events-none" fill="none">
      <ellipse cx="1210.5" cy="108" rx="39" ry="25" stroke="#e8303a" strokeWidth="3" />
      <circle cx="529" cy="738.5" r="65.5" stroke="#e04045" strokeWidth="3" />
      <path d="M1183 130L1183.5 130.5L574 692.5L571 689.5Z" fill="#e8434a" />
      <path d="M557 705L567 682L574 691L581 698Z" fill="#e8434a" />
    </svg>
  );
}

export default function App() {
  return (
    <div className="relative w-[1289px] h-[926px] overflow-hidden bg-white text-[12px] leading-none text-[#333] flex flex-col font-['Noto_Sans_CJK_SC','Noto_Sans',sans-serif]">
      <Ribbon />
      <div className="flex flex-1 min-h-0">
        <div className="w-[365px] shrink-0 flex flex-col overflow-hidden">
          <div className="h-[26px] shrink-0 bg-[#f2f2f2] flex items-center -ml-[2px]">
            <Select w="w-[48px]" cut />
            <div className="ml-[5px]"><Select w="w-[98px]" t="基础" /></div>
            <div className="ml-[4px]"><Select w="w-[98px]" t="桩承台" /></div>
            <div className="ml-[4px]"><Select w="w-[98px]" t="ZCT-1" /></div>
          </div>
          <div className="flex-1 flex min-h-0">
            <LeftPanel />
            <MidPanel />
          </div>
        </div>
        <div className="flex-1 relative bg-black overflow-hidden">
          <div className="absolute left-[600px] right-0 top-[355px] h-[8px] bg-[#2fdc2f]" />
          <div className="absolute left-[600px] right-0 top-[365px] h-[7px] bg-[#2fdc2f]" />
          <div className="absolute left-[666px] top-[807px] text-[18px] leading-[18px] text-[#ddd]">3000</div>
          <div className="absolute left-[833px] top-[807px] text-[18px] leading-[18px] text-[#ddd]">3000</div>
        </div>
      </div>
      <ParamDialog />
      <RebarDialog />
      <Annotation />
    </div>
  );
}
